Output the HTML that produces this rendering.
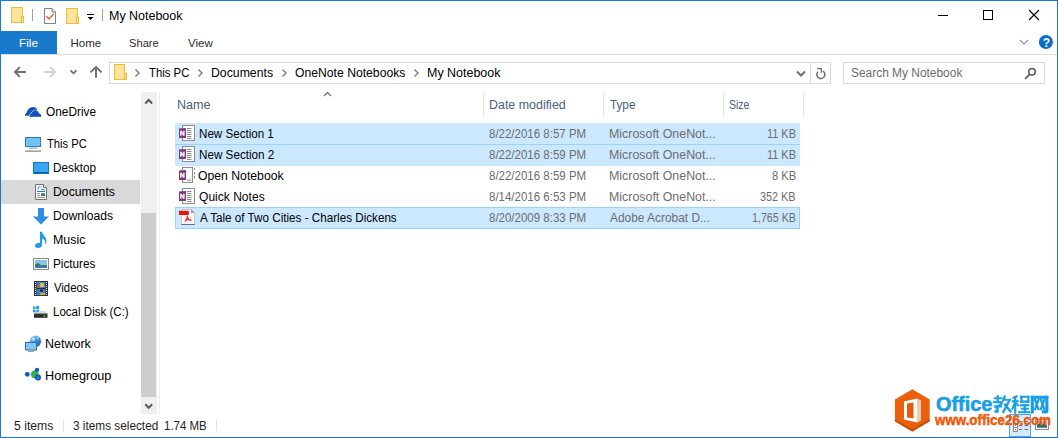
<!DOCTYPE html>
<html><head><meta charset="utf-8"><style>
html,body{margin:0;padding:0;}
body{width:1058px;height:438px;position:relative;overflow:hidden;background:#fff;font-family:"Liberation Sans",sans-serif;font-size:12px;}
.t{position:absolute;white-space:pre;line-height:12px;transform-origin:0 0;}
.r{position:absolute;}
svg.ov{position:absolute;left:0;top:0;}
.bd{position:absolute;background:#1a78d2;}
</style></head><body>
<div class="r" style="left:32px;top:9px;width:1px;height:12px;background:#a0a0a0;"></div>
<div class="r" style="left:87px;top:14px;width:7px;height:1px;background:#000;"></div>
<div class="r" style="left:102px;top:9px;width:1px;height:12px;background:#a0a0a0;"></div>
<div class="t" style="left:109.26px;top:10.00px;color:#000;transform:scaleX(1.0386);">My Notebook</div>
<div class="r" style="left:938px;top:15px;width:10px;height:1px;background:#000;"></div>
<div class="r" style="left:0px;top:31px;width:57px;height:23px;background:#1979ca;"></div>
<div class="t" style="left:19.47px;top:37.18px;color:#fff;font-size:11.5px;transform:scaleX(1.0294);">File</div>
<div class="t" style="left:70.50px;top:37.18px;color:#2b2b2b;font-size:11.5px;">Home</div>
<div class="t" style="left:129.33px;top:37.18px;color:#2b2b2b;font-size:11.5px;transform:scaleX(0.9690);">Share</div>
<div class="t" style="left:188.00px;top:37.18px;color:#2b2b2b;font-size:11.5px;">View</div>
<div class="r" style="left:0px;top:54px;width:1058px;height:1px;background:#dadbdc;"></div>
<div class="r" style="left:109px;top:62px;width:722px;height:22px;background:#fff;box-sizing:border-box;border:1px solid #d9d9d9;"></div>
<div class="t" style="left:149.30px;top:67.00px;color:#000;transform:scaleX(0.9452);">This PC</div>
<div class="t" style="left:211.28px;top:67.00px;color:#000;transform:scaleX(1.0220);">Documents</div>
<div class="t" style="left:295.19px;top:67.00px;color:#000;transform:scaleX(1.0150);">OneNote Notebooks</div>
<div class="t" style="left:427.26px;top:67.00px;color:#000;transform:scaleX(1.0386);">My Notebook</div>
<div class="r" style="left:810px;top:62px;width:1px;height:22px;background:#d9d9d9;"></div>
<div class="r" style="left:843px;top:62px;width:202px;height:22px;background:#fff;box-sizing:border-box;border:1px solid #d9d9d9;"></div>
<div class="t" style="left:851.31px;top:67.00px;color:#6d6d6d;transform:scaleX(0.9937);">Search My Notebook</div>
<div class="r" style="left:141px;top:92px;width:16px;height:322px;background:#f0f0f0;"></div>
<div class="r" style="left:141px;top:213px;width:15px;height:184px;background:#cdcdcd;"></div>
<div class="r" style="left:159px;top:92px;width:1px;height:322px;background:#eeeeee;"></div>
<div class="r" style="left:1px;top:180px;width:139px;height:24px;background:#d9d9d9;"></div>
<div class="t" style="left:45.61px;top:106.00px;color:#000;transform:scaleX(0.9878);">OneDrive</div>
<div class="t" style="left:46.60px;top:138.00px;color:#000;transform:scaleX(0.9333);">This PC</div>
<div class="t" style="left:53.42px;top:162.00px;color:#000;transform:scaleX(0.9791);">Desktop</div>
<div class="t" style="left:53.38px;top:186.00px;color:#000;transform:scaleX(1.0203);">Documents</div>
<div class="t" style="left:53.39px;top:210.00px;color:#000;transform:scaleX(1.0103);">Downloads</div>
<div class="t" style="left:53.37px;top:234.00px;color:#000;transform:scaleX(1.0333);">Music</div>
<div class="t" style="left:53.42px;top:258.00px;color:#000;transform:scaleX(0.9786);">Pictures</div>
<div class="t" style="left:54.40px;top:282.00px;color:#000;transform:scaleX(0.9417);">Videos</div>
<div class="t" style="left:53.44px;top:306.00px;color:#000;transform:scaleX(0.9623);">Local Disk (C:)</div>
<div class="t" style="left:45.36px;top:338.00px;color:#000;transform:scaleX(1.0419);">Network</div>
<div class="t" style="left:45.34px;top:370.00px;color:#000;transform:scaleX(1.0590);">Homegroup</div>
<div class="t" style="left:177.45px;top:99.00px;color:#4c607a;transform:scaleX(1.0500);">Name</div>
<div class="r" style="left:483px;top:92px;width:1px;height:25px;background:#e8e8e8;"></div>
<div class="r" style="left:603px;top:92px;width:1px;height:25px;background:#e8e8e8;"></div>
<div class="r" style="left:723px;top:92px;width:1px;height:25px;background:#e8e8e8;"></div>
<div class="r" style="left:803px;top:92px;width:1px;height:25px;background:#e8e8e8;"></div>
<div class="t" style="left:489.16px;top:99.00px;color:#4c607a;transform:scaleX(1.0361);">Date modified</div>
<div class="t" style="left:610.40px;top:99.00px;color:#4c607a;transform:scaleX(0.9760);">Type</div>
<div class="t" style="left:729.42px;top:99.00px;color:#4c607a;transform:scaleX(0.8773);">Size</div>
<div class="r" style="left:175px;top:123px;width:625px;height:43px;background:#cce8ff;"></div>
<div class="r" style="left:175px;top:144px;width:625px;height:1px;background:#99d1ff;"></div>
<div class="r" style="left:175px;top:207px;width:625px;height:22px;background:#cce8ff;box-sizing:border-box;border:1px solid #99d1ff;"></div>
<div class="t" style="left:198.53px;top:128.00px;color:#000;transform:scaleX(0.9671);">New Section 1</div>
<div class="t" style="left:489.24px;top:128.00px;color:#6d6d6d;transform:scaleX(0.9580);">8/22/2016 8:57 PM</div>
<div class="t" style="left:609.37px;top:128.00px;color:#6d6d6d;transform:scaleX(1.0327);">Microsoft OneNot...</div>
<div class="t" style="left:767.09px;top:128.00px;color:#6d6d6d;transform:scaleX(0.9100);">11 KB</div>
<div class="t" style="left:198.53px;top:149.00px;color:#000;transform:scaleX(0.9737);">New Section 2</div>
<div class="t" style="left:489.24px;top:149.00px;color:#6d6d6d;transform:scaleX(0.9580);">8/22/2016 8:59 PM</div>
<div class="t" style="left:609.37px;top:149.00px;color:#6d6d6d;transform:scaleX(1.0327);">Microsoft OneNot...</div>
<div class="t" style="left:767.09px;top:149.00px;color:#6d6d6d;transform:scaleX(0.9100);">11 KB</div>
<div class="t" style="left:198.48px;top:170.00px;color:#000;transform:scaleX(1.0181);">Open Notebook</div>
<div class="t" style="left:489.24px;top:170.00px;color:#6d6d6d;transform:scaleX(0.9580);">8/22/2016 8:59 PM</div>
<div class="t" style="left:609.37px;top:170.00px;color:#6d6d6d;transform:scaleX(1.0327);">Microsoft OneNot...</div>
<div class="t" style="left:772.07px;top:170.00px;color:#6d6d6d;transform:scaleX(0.9292);">8 KB</div>
<div class="t" style="left:198.50px;top:191.00px;color:#000;transform:scaleX(1.0047);">Quick Notes</div>
<div class="t" style="left:489.24px;top:191.00px;color:#6d6d6d;transform:scaleX(0.9580);">8/14/2016 6:53 PM</div>
<div class="t" style="left:609.37px;top:191.00px;color:#6d6d6d;transform:scaleX(1.0327);">Microsoft OneNot...</div>
<div class="t" style="left:760.20px;top:191.00px;color:#6d6d6d;transform:scaleX(0.9000);">352 KB</div>
<div class="t" style="left:199.50px;top:212.00px;color:#000;transform:scaleX(0.9723);">A Tale of Two Cities - Charles Dickens</div>
<div class="t" style="left:489.24px;top:212.00px;color:#6d6d6d;transform:scaleX(0.9580);">8/20/2009 8:33 PM</div>
<div class="t" style="left:610.40px;top:212.00px;color:#6d6d6d;transform:scaleX(0.9920);">Adobe Acrobat D...</div>
<div class="t" style="left:751.71px;top:212.00px;color:#6d6d6d;transform:scaleX(0.8896);">1,765 KB</div>
<div class="t" style="left:14.28px;top:420.00px;color:#1e1e1e;transform:scaleX(1.0189);">5 items</div>
<div class="r" style="left:63px;top:420px;width:1px;height:11px;background:#e3e3e3;"></div>
<div class="t" style="left:73.02px;top:420.00px;color:#1e1e1e;transform:scaleX(0.9835);">3 items selected</div>
<div class="t" style="left:163.74px;top:420.00px;color:#1e1e1e;transform:scaleX(0.9558);">1.74 MB</div>
<div class="r" style="left:216px;top:420px;width:1px;height:11px;background:#e3e3e3;"></div>
<div class="r" style="left:1009px;top:414px;width:22px;height:23px;background:#d5ebfc;box-sizing:border-box;border:1px solid #4aa3ea;"></div>
<svg class="ov" width="1058" height="438" viewBox="0 0 1058 438">
<rect x="11.5" y="7.5" width="11" height="15" fill="#fde49a" stroke="#e8bf3a"/>
<rect x="21.5" y="16.5" width="2" height="6" fill="#fde49a" stroke="#e8bf3a"/>
<path d="M44.5 8.5H52L55.5 12V23.5H44.5Z" fill="#fff" stroke="#808080"/><path d="M52 8.5V12H55.5" fill="#ddd" stroke="#808080"/>
<path d="M46.4 16.2L49 19L53.8 14" fill="none" stroke="#f05a22" stroke-width="1.35"/>
<rect x="66.5" y="8.5" width="11" height="15" fill="#fde49a" stroke="#e8bf3a"/>
<rect x="76.5" y="17.5" width="2" height="6" fill="#fde49a" stroke="#e8bf3a"/>
<path d="M87.5 17H93.5L90.5 20Z" fill="#000"/>
<rect x="983.5" y="10.5" width="9" height="9" fill="none" stroke="#000"/>
<path d="M1029 10L1039 20M1039 10L1029 20" stroke="#000" stroke-width="1.15"/>
<path d="M1020 40L1024 44L1028 40" fill="none" stroke="#8c8c8c" stroke-width="1.1"/>
<circle cx="1045.9" cy="42" r="7" fill="#0b6ccc"/>
<text x="1046.3" y="47" font-family="Liberation Sans" font-weight="bold" font-size="12" fill="#fff" text-anchor="middle">?</text>
<path d="M15 72H26M19.8 67.2L15 72L19.8 76.8" fill="none" stroke="#707070" stroke-width="1.9"/>
<path d="M44 72H55M50.2 67.2L55 72L50.2 76.8" fill="none" stroke="#d2d2d2" stroke-width="1.9"/>
<path d="M70.5 70.3L73.5 73.3L76.5 70.3" fill="none" stroke="#707070" stroke-width="1.8"/>
<path d="M96 77.8V67M90.5 72.3L96 66.8L101.5 72.3" fill="none" stroke="#707070" stroke-width="1.9"/>
<rect x="114.5" y="64.5" width="10" height="15" fill="#fde49a" stroke="#e8bf3a"/>
<rect x="124.5" y="73.5" width="2" height="6" fill="#fde49a" stroke="#e8bf3a"/>
<path d="M135.5 69.5L139.0 73L135.5 76.5" fill="none" stroke="#848484" stroke-width="1.5"/>
<path d="M198.5 69.5L202.0 73L198.5 76.5" fill="none" stroke="#848484" stroke-width="1.5"/>
<path d="M282.5 69.5L286.0 73L282.5 76.5" fill="none" stroke="#848484" stroke-width="1.5"/>
<path d="M414.5 69.5L418.0 73L414.5 76.5" fill="none" stroke="#848484" stroke-width="1.5"/>
<path d="M797 71.5L801 75.5L805 71.5" fill="none" stroke="#707070" stroke-width="2"/>
<path d="M818 71.8A4 4 0 1 0 822.85 71.14" fill="none" stroke="#707070" stroke-width="1.6"/>
<path d="M817 68.6H821.3V72.8" fill="none" stroke="#707070" stroke-width="1.3"/>
<circle cx="1032" cy="71.8" r="3.3" fill="none" stroke="#606060" stroke-width="1.6"/>
<path d="M1029.6 74.4L1025.2 78.8" stroke="#606060" stroke-width="1.9"/>
<path d="M145.3 103.5L148.7 99.9L152.1 103.5" fill="none" stroke="#555" stroke-width="2"/>
<path d="M145.3 404.3L148.7 407.9L152.1 404.3" fill="none" stroke="#555" stroke-width="2"/>
<g transform="translate(22 104)"><path d="M3 11.8C3 10.3 3.6 9.3 4.6 8.8C5.2 5.8 7.8 3 11.2 3C13 3 14.6 3.9 15.4 5.4L14 6.3C11.6 6.3 9.6 7.6 8.8 9.4C7.8 9.8 7 10.8 7 11.8Z" fill="#1150be"/><path d="M7.5 12.8C7.5 11 8.4 9.9 9.5 9.6C10 7.6 11.5 6.2 13.2 6.2C15.2 6.2 16.6 7.7 16.9 9.5C18.3 9.6 19.2 10.8 19.2 12.1V12.8Z" fill="#1150be" stroke="#fff" stroke-width="0.9"/><path d="M7.5 12.8C7.5 11 8.4 9.9 9.5 9.6C10 7.6 11.5 6.2 13.2 6.2C15.2 6.2 16.6 7.7 16.9 9.5C18.3 9.6 19.2 10.8 19.2 12.1V12.8Z" fill="#1150be"/></g>
<rect x="25.5" y="137.5" width="15" height="9" fill="#6cc4f8" stroke="#2f7db8"/><rect x="29" y="147.6" width="8" height="1" fill="#909090"/><rect x="25" y="150.5" width="16" height="1.3" fill="#8a8a8a"/>
<rect x="33.5" y="162.5" width="15" height="11" fill="#3aa6f0" stroke="#0c78d4"/><rect x="34" y="172" width="14" height="1.5" fill="#0b5fa8"/>
<path d="M35.5 184.5H43.5L46.5 187.5V199.5H35.5Z" fill="#fff" stroke="#707070"/><path d="M43.5 184.5V187.5H46.5" fill="#eee" stroke="#707070"/>
<path d="M37.5 189.5L39.5 186M40.5 187H42" stroke="#2a9ae6" stroke-width="1"/><rect x="41" y="189" width="4" height="1" fill="#2a9ae6"/><rect x="37" y="191" width="8" height="1" fill="#1e7ad0"/><rect x="37" y="193" width="3" height="1" fill="#999"/><rect x="37" y="195" width="3" height="1" fill="#999"/><rect x="37" y="197" width="8" height="1" fill="#999"/><rect x="41" y="193" width="4" height="3" fill="#3a7a4a"/><rect x="41" y="193" width="4" height="1" fill="#4aa0e8"/>
<path d="M38 208H44V216.5H49L41 224.5L33 216.5H38Z" fill="#2f8be2"/>
<path d="M40 231.8H42C42.5 235 46.5 237 46.5 241C46.5 242.5 46 243.5 45.2 244.2C45.8 241 44 239 42 238.5V245C42 247 40 248 38 248C36 248 35 246.8 35 245.6C35 243.8 37 243 38.5 243C39 243 39.6 243.1 40 243.3Z" fill="#1e9ae8"/>
<rect x="33.5" y="258.5" width="15" height="11" fill="#fff" stroke="#8a8a8a"/><rect x="35" y="260" width="12" height="8" fill="#8cc4ec"/><path d="M35 264L38 263L41 265L47 265V268H35Z" fill="#3f7e58"/><rect x="35" y="266.5" width="12" height="1.5" fill="#3a78c8"/>
<rect x="34" y="281" width="14" height="15" fill="#2e2e2e"/><rect x="36.5" y="281.8" width="9" height="6.2" fill="#3a7fd8"/><rect x="36.5" y="289" width="9" height="6.2" fill="#3a7fd8"/><rect x="40" y="283" width="4" height="4" fill="#e8c020"/><rect x="37" y="285.5" width="3" height="2" fill="#e05030"/><rect x="40" y="293" width="5" height="2" fill="#e0a020"/><rect x="40" y="289.5" width="3" height="2" fill="#222"/>
<g fill="#eee"><rect x="35" y="282" width="1" height="1"/><rect x="46" y="282" width="1" height="1"/><rect x="35" y="284" width="1" height="1"/><rect x="46" y="284" width="1" height="1"/><rect x="35" y="286" width="1" height="1"/><rect x="46" y="286" width="1" height="1"/><rect x="35" y="288" width="1" height="1"/><rect x="46" y="288" width="1" height="1"/><rect x="35" y="290" width="1" height="1"/><rect x="46" y="290" width="1" height="1"/><rect x="35" y="292" width="1" height="1"/><rect x="46" y="292" width="1" height="1"/><rect x="35" y="294" width="1" height="1"/><rect x="46" y="294" width="1" height="1"/></g>
<g fill="#1e9be8"><rect x="33" y="306.5" width="2.6" height="2.6"/><rect x="36.3" y="306" width="2.8" height="3.1"/><rect x="33" y="309.8" width="2.6" height="2.6"/><rect x="36.3" y="309.8" width="2.8" height="2.8"/></g>
<path d="M39.5 311H45L47.5 313.5H34Z" fill="#d8d8d8"/><rect x="34" y="313.5" width="13.5" height="4.3" fill="#2a2a2a"/><rect x="34" y="313.3" width="13.5" height="0.8" fill="#9a9a9a"/><rect x="43.6" y="315.2" width="1.6" height="1.6" fill="#3bd43b"/>
<defs><linearGradient id="glb" x1="0" y1="0" x2="1" y2="1"><stop offset="0" stop-color="#b8e2f8"/><stop offset="0.45" stop-color="#4a9ede"/><stop offset="1" stop-color="#1a4f90"/></linearGradient></defs>
<circle cx="35.3" cy="341.3" r="5.8" fill="url(#glb)"/><path d="M31.5 338.5L34 337.5L35.5 339L33.5 341ZM37 336.5L39 338L38 339.5Z" fill="#e8f6fc" opacity="0.8"/>
<rect x="25.5" y="342.5" width="11" height="7.5" fill="#7cc8f6" stroke="#2a6fae"/><rect x="28" y="350.8" width="6" height="1" fill="#888"/>
<circle cx="27.3" cy="374.3" r="2.4" fill="#0d55c0"/><circle cx="34.8" cy="374.3" r="3.9" fill="#2db34a"/><circle cx="37" cy="369.9" r="2.1" fill="#0d55c0"/><circle cx="38" cy="377.6" r="3" fill="#0d55c0"/><circle cx="38" cy="377.6" r="1.2" fill="#3a8ae0"/>
<path d="M324 96L327.5 92.5L331 96" fill="none" stroke="#666" stroke-width="1.1"/>
<rect x="182.5" y="125.5" width="12" height="15" fill="#fff" stroke="#8d8d8d"/>
<g fill="#8a8a8a"><rect x="187" y="128" width="4.5" height="1"/><rect x="187" y="130" width="4.5" height="1"/><rect x="187" y="132" width="4.5" height="1"/><rect x="187" y="134" width="4.5" height="1"/><rect x="187" y="136" width="4.5" height="1"/><rect x="187" y="138" width="4.5" height="1"/></g>
<path d="M179 128.5L186 128V138L179 138Z" fill="#80397b"/>
<path d="M180.2 135.8V130.8H181.7L183.2 133.6V130.8H184.6V135.8H183.1L181.6 133V135.8Z" fill="#fff"/>
<rect x="182.5" y="146.5" width="12" height="15" fill="#fff" stroke="#8d8d8d"/>
<g fill="#8a8a8a"><rect x="187" y="149" width="4.5" height="1"/><rect x="187" y="151" width="4.5" height="1"/><rect x="187" y="153" width="4.5" height="1"/><rect x="187" y="155" width="4.5" height="1"/><rect x="187" y="157" width="4.5" height="1"/><rect x="187" y="159" width="4.5" height="1"/></g>
<path d="M179 149.5L186 149V159L179 159Z" fill="#80397b"/>
<path d="M180.2 156.8V151.8H181.7L183.2 154.6V151.8H184.6V156.8H183.1L181.6 154V156.8Z" fill="#fff"/>
<rect x="182.5" y="167.5" width="10" height="15" fill="#fff" stroke="#8d8d8d"/><rect x="187" y="179.6" width="4.5" height="1" fill="#888"/>
<g fill="#8a8a8a"><rect x="194" y="168" width="1" height="2"/><rect x="194" y="172" width="1" height="2.5"/><rect x="194" y="176" width="1" height="2.5"/></g>
<path d="M179 170.5L186 170V180L179 180Z" fill="#80397b"/>
<path d="M180.2 177.8V172.8H181.7L183.2 175.6V172.8H184.6V177.8H183.1L181.6 175V177.8Z" fill="#fff"/>
<rect x="182.5" y="188.5" width="12" height="15" fill="#fff" stroke="#8d8d8d"/>
<g fill="#8a8a8a"><rect x="187" y="191" width="4.5" height="1"/><rect x="187" y="193" width="4.5" height="1"/><rect x="187" y="195" width="4.5" height="1"/><rect x="187" y="197" width="4.5" height="1"/><rect x="187" y="199" width="4.5" height="1"/><rect x="187" y="201" width="4.5" height="1"/></g>
<path d="M179 191.5L186 191V201L179 201Z" fill="#80397b"/>
<path d="M180.2 198.8V193.8H181.7L183.2 196.6V193.8H184.6V198.8H183.1L181.6 196V198.8Z" fill="#fff"/>
<path d="M181.5 209.5H191L194.5 213V224.5H181.5Z" fill="#f8f8f8" stroke="#c8c8c8"/><path d="M191 209V213H195Z" fill="#a0a0a0"/><rect x="181" y="224" width="14" height="1" fill="#707070"/>
<rect x="179" y="210.8" width="9.8" height="4.2" fill="#e8160c"/>
<path d="M187.5 215.5C187.5 218 186 220 185 221.5M187.5 217.5C188.5 219.5 190 220.5 191.5 220.5M185.5 220.5C187 219.5 189 219.3 191 219.8" fill="none" stroke="#e8261c" stroke-width="1.1"/>
<rect x="1013.5" y="419.5" width="4" height="12" fill="#fff" stroke="#8a8a8a"/><rect x="1013.5" y="423.5" width="4" height="4" fill="none" stroke="#8a8a8a"/><rect x="1015" y="425" width="1" height="1" fill="#3a82d4"/><rect x="1015" y="429" width="1" height="1" fill="#e2231a"/>
<g fill="#6d6d6d"><rect x="1019" y="421" width="3" height="1"/><rect x="1024.5" y="421" width="3.5" height="1"/><rect x="1019" y="425" width="3" height="1"/><rect x="1024.5" y="425" width="3.5" height="1"/><rect x="1019" y="429" width="3" height="1"/><rect x="1024.5" y="429" width="3.5" height="1"/></g>
<rect x="1035.5" y="419.5" width="13" height="10" fill="#fff" stroke="#8a8a8a"/><rect x="1037" y="421" width="10" height="7" fill="#7fb8e8"/><path d="M1037 424.5L1041 423.5L1047 425.5V428H1037Z" fill="#2f6a4a"/><rect x="1037" y="426.8" width="10" height="1.2" fill="#4a8ad0"/>
</svg>
<svg class="ov" width="1058" height="438" viewBox="0 0 1058 438">
<path d="M912.3 389.2L929.7 399.5V421.3L912.3 431.6L894.9 421.3V399.5Z" fill="#ea600e"/><path d="M894.9 419.3L912.3 429.6L929.7 419.3V421.3L912.3 431.6L894.9 421.3Z" fill="#c44a08"/>
<path d="M904 401.5L917 398.5V422.5L904 419.5Z" fill="#fff"/><path d="M907 403.5L913.5 402.5V418.5L907 417.5Z" fill="#e8590c"/><path d="M917 398.5L921 400.5V420.5L917 422.5Z" fill="#f6c8b0"/>
<g fill="#189ee6" stroke="#189ee6" stroke-width="0.5"><rect x="994.02" y="397.52" width="8.04" height="1.41"/><rect x="996.93" y="395.51" width="1.71" height="7.54"/><rect x="993.02" y="401.29" width="9.8" height="1.61"/><rect x="994.52" y="405.56" width="7.29" height="1.61"/><rect x="996.53" y="407.07" width="1.91" height="5.28"/><rect x="994.77" y="410.34" width="2.76" height="2.26"/><rect x="1012.01" y="400.54" width="6.63" height="1.61"/><rect x="1014.27" y="397.52" width="1.76" height="15.83"/><rect x="1020.55" y="396.02" width="8.54" height="1.51"/><rect x="1020.55" y="396.02" width="1.61" height="6.53"/><rect x="1027.49" y="396.02" width="1.61" height="6.53"/><rect x="1020.55" y="400.79" width="8.54" height="1.76"/><rect x="1020.05" y="404.46" width="9.05" height="1.61"/><rect x="1021.06" y="407.97" width="7.54" height="1.41"/><rect x="1018.54" y="411.34" width="11.56" height="1.61"/><rect x="1023.97" y="404.46" width="1.71" height="8.49"/><rect x="1031.01" y="396.02" width="2.76" height="17.09"/><rect x="1031.01" y="396.02" width="17.09" height="2.61"/><rect x="1045.48" y="396.02" width="2.61" height="16.08"/><rect x="1042.07" y="410.34" width="5.53" height="2.76"/></g><g stroke="#189ee6" fill="none"><path d="M1002.31 403.05L995.28 408.08" stroke-width="2.09"/><path d="M1005.08 395.51L1002.81 401.04" stroke-width="2.09"/><path d="M1003.07 399.78L1011.11 399.78" stroke-width="1.96"/><path d="M1009.35 400.54L1002.81 412.85" stroke-width="2.35"/><path d="M1004.32 403.8L1011.11 412.35" stroke-width="2.35"/><path d="M1017.54 396.02L1012.51 398.03" stroke-width="1.96"/><path d="M1015.03 402.55L1012.01 409.58" stroke-width="2.09"/><path d="M1016.03 403.05L1018.79 406.07" stroke-width="1.96"/><path d="M1034.78 398.78L1038.8 410.09" stroke-width="2.22"/><path d="M1038.8 398.78L1034.78 410.09" stroke-width="2.22"/><path d="M1040.56 398.78L1044.58 410.09" stroke-width="2.22"/><path d="M1044.58 398.78L1040.56 410.09" stroke-width="2.22"/></g>
</svg>
<div class="t" style="left:935.91px;top:398.23px;color:#189ee6;font-size:20px;transform:scaleX(0.9945);font-weight:bold;-webkit-text-stroke:0.6px #189ee6;">Office</div>
<div class="t" style="left:935.00px;top:414.16px;color:#f05a0a;font-size:15px;transform:scaleX(0.8900);font-weight:bold;-webkit-text-stroke:0.5px #f05a0a;">www.office26.com</div>
<div class="bd" style="left:0;top:0;width:1058px;height:1px"></div>
<div class="bd" style="left:0;top:0;width:1px;height:438px"></div>
<div class="bd" style="left:1057px;top:0;width:1px;height:438px"></div>
<div class="bd" style="left:0;top:437px;width:1058px;height:1px"></div>
</body></html>
